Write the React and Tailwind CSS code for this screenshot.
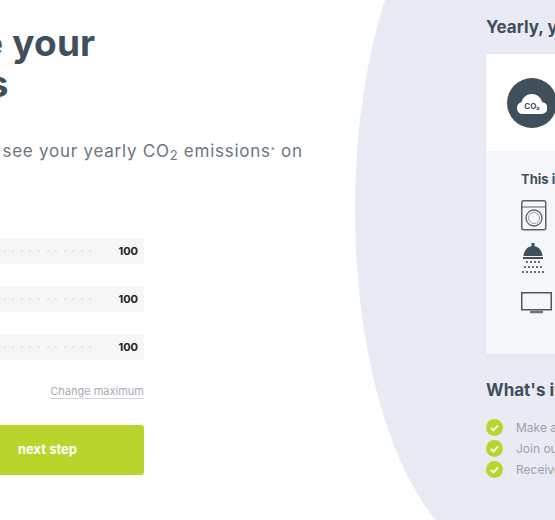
import React from "react";

const font = { fontFamily: '"Inter", "Liberation Sans", sans-serif' };
const dots = Array.from({ length: 29 });

const Slider = () => (
  <div className="flex h-[26px] items-center justify-between rounded-sm bg-[#f6f6f6] pr-[6px]">
    <div className="flex gap-[6.55px] pl-[5px]">
      {dots.map((_, i) => (
        <span key={i} className="h-[2px] w-[2px] rounded-full bg-[#dcdcdc]" />
      ))}
    </div>
    <span className="text-[11px] font-bold text-[#222]">100</span>
  </div>
);

const Check = ({ children }) => (
  <li className="flex h-[21px] items-center gap-[13px]">
    <span className="flex h-[17px] w-[17px] shrink-0 items-center justify-center rounded-full bg-[#b9d52c]">
      <svg width="9" height="8" viewBox="0 0 9 8" fill="none">
        <path d="M1 4l2.4 2.4L8 1.4" stroke="#fff" strokeWidth="1.8" />
      </svg>
    </span>
    <span className="whitespace-nowrap text-[12px] text-[#9aa1ab]">{children}</span>
  </li>
);

const App = () => {
  return (
    <div className="relative h-[520px] w-[555px] overflow-hidden bg-white" style={font}>
      <div className="absolute left-[355px] top-[-140px] h-[700px] w-[300px] rounded-[50%] bg-[#e8ebf3]" />
      <div className="relative flex">
        <div className="ml-[-155px] w-[299px] shrink-0">
          <h1 className="ml-[-14px] mt-[22px] whitespace-nowrap text-[37px] font-bold leading-[41px] tracking-[0.2px] text-[#3f4f5c]">
            <span className="block">Calculate your</span>
            <span className="ml-[-8px] block">emissions</span>
          </h1>
          <p className="ml-[-59px] mt-[35px] w-[520px] whitespace-nowrap text-[17px] leading-[24px] tracking-[0.75px] text-[#6b7680]">
            Use the sliders below to see your yearly CO<sub className="text-[13px]">2</sub> emissions
            <sup className="text-[8px]">*</sup> on
          </p>
          <div className="mt-[75px] flex flex-col gap-[22px]">
            <Slider />
            <Slider />
            <Slider />
          </div>
          <div className="mt-[25px] flex justify-end">
            <a className="border-b border-[#d5d7dc] text-[11px] leading-[13px] text-[#a6abb3]">Change maximum</a>
          </div>
          <button className="mt-[26px] flex h-[50px] w-full items-center rounded-[3px] bg-[#b9d52c] pl-[173px] text-[13px] font-bold text-white">
            next step
          </button>
        </div>
        <div className="ml-[342px] w-[300px] shrink-0">
          <h2 className="mt-[17px] whitespace-nowrap text-[17px] font-bold leading-[20px] text-[#3f4f5c]">
            Yearly, you emit
          </h2>
          <div className="mt-[17px] h-[300px] bg-[#f5f6f9] shadow-[0_0_2px_rgba(60,70,90,0.1)]">
            <div className="flex h-[97px] items-center bg-white pl-[21px]">
              <div className="flex h-[50px] w-[50px] items-center justify-center rounded-full bg-[#3f4f5c]">
                <svg width="30" height="25" viewBox="0 0 30 25">
                  <path
                    d="M6 24a6 6 0 0 1-1.5-11.8A10.5 10.5 0 0 1 25 12a6 6 0 0 1-1 12Z"
                    fill="#fff"
                  />
                  <text x="15" y="19" textAnchor="middle" fontSize="8" fontWeight="700" fill="#3f4f5c">
                    CO₂
                  </text>
                </svg>
              </div>
            </div>
            <div className="pl-[35px] pt-[20px]">
              <p className="text-[13px] font-bold leading-[16px] text-[#3f4f5c]">This is equal to</p>
              <svg className="mt-[13px] block" width="26" height="31" viewBox="0 0 26 31" fill="none" stroke="#56636e">
                <rect x="0.75" y="0.75" width="24" height="29" rx="2" strokeWidth="1.5" />
                <path d="M1 7h24" />
                <circle cx="13" cy="18" r="8" strokeWidth="1.3" />
                <circle cx="13" cy="18" r="5.5" stroke="#9aa3ab" />
              </svg>
              <svg className="mt-[12px] block" width="24" height="33" viewBox="0 0 24 33" fill="#3f4f5c">
                <rect x="10.5" y="0" width="3" height="5" />
                <path d="M12 3c5 0 9 4 9.5 10h-19C3 7 7 3 12 3Z" />
                <rect x="2" y="14" width="20" height="2" />
                {[
                  [6, 19], [10, 19], [14, 19], [18, 19],
                  [4, 24], [8, 24], [12, 24], [16, 24], [20, 24],
                  [2, 29], [6, 29], [10, 29], [14, 29], [18, 29], [22, 29],
                ].map(([cx, cy]) => (
                  <circle key={`${cx}-${cy}`} cx={cx} cy={cy} r="1.1" />
                ))}
              </svg>
              <svg className="mt-[16px] block" width="31" height="22" viewBox="0 0 31 22" fill="none" stroke="#4a5762">
                <rect x="0.75" y="0.75" width="29.5" height="17" strokeWidth="1.5" />
                <path d="M9 20h13" strokeWidth="2.5" stroke="#6b7680" />
              </svg>
            </div>
          </div>
          <h2 className="mt-[26px] whitespace-nowrap text-[17px] font-bold leading-[20px] text-[#3f4f5c]">
            What's included
          </h2>
          <ul className="mt-[17px]">
            <Check>Make a pledge</Check>
            <Check>Join our community</Check>
            <Check>Receive monthly tips</Check>
          </ul>
        </div>
      </div>
    </div>
  );
};

export default App;
